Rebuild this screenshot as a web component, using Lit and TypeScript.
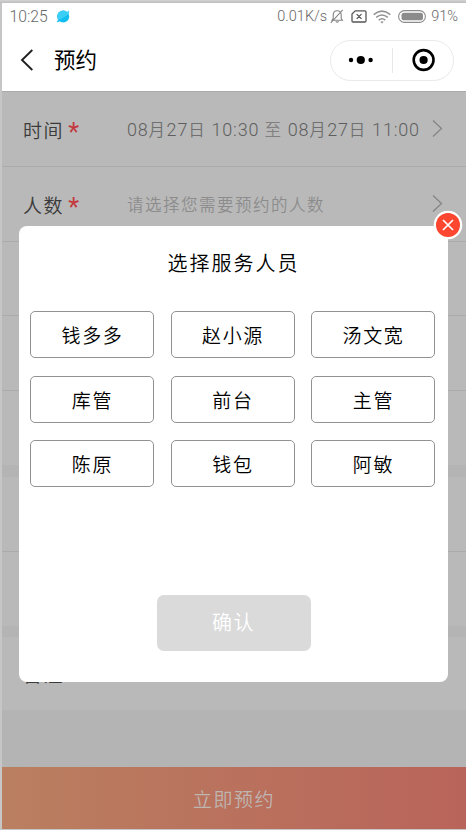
import { LitElement, html, css } from "lit";
import { customElement, state } from "lit/decorators.js";

const STAFF = ["钱多多", "赵小源", "汤文宽", "库管", "前台", "主管", "陈原", "钱包", "阿敏"];

@customElement("status-bar")
class StatusBar extends LitElement {
  static styles = css`
    :host { display: flex; align-items: center; height: 27px; padding: 0 8px 0 7.500px; color: #686868;
      font: 15.2px/27px Roboto, "Noto Sans CJK SC", sans-serif; font-weight: 350; }
    .clock { width: 39px; margin-right: 7.500px; font-size: 15.7px; white-space: nowrap; }
    .grow { flex: 1; }
    svg { display: block; flex: none; }
    .speed { font-size: 14.5px; margin-right: 3px; white-space: nowrap; }
    .bell { margin-right: 7px; }
    .sim { margin-right: 6px; }
    .wifi { margin-right: 7px; }
    .battery { margin-right: 5px; }
    .percent { font-size: 14.5px; }
  `;
  render() {
    return html`
      <span class="clock">10:25</span>
      <svg width="14" height="14" viewBox="0 0 14 14">
        <circle cx="7.200" cy="6.500" r="6" fill="#12bdf0" />
        <path d="M1.300 7.500A6 6 0 0 1 11 2L13.200.3l-.5 3.400C9.700 6.500 6 9.100 2.200 10z" fill="#3bcff7" />
        <path d="M2 9.800.7 12.300 4 11.500z" fill="#12bdf0" />
      </svg>
      <span class="grow"></span>
      <span class="speed">0.01K/s</span>
      <svg class="bell" width="14" height="15" viewBox="0 0 14 15" fill="none" stroke="#858585" stroke-width="1.1">
        <path d="M2 11.3h10.4L11.2 9.6V6c0-2.5-1.6-4.2-4-4.2S3.2 3.500 3.200 6v3.600zM5.700 12.300q1.500 1.500 3 0M12.700.8.8 13.800" />
      </svg>
      <svg class="sim" width="16" height="13" viewBox="0 0 16 13" fill="none" stroke="#555" stroke-width="1.3">
        <path d="M4.200.9h9.600q1.200 0 1.200 1.200v8.700q0 1.200-1.200 1.200H2.200Q1 12 1 10.800V4zM5.700 4.100l4.800 4.800M10.500 4.100 5.700 8.900" />
      </svg>
      <svg class="wifi" width="18" height="14" viewBox="0 0 18 14" fill="none" stroke="#929292" stroke-width="1.500">
        <path d="M.7 4.600q8.300-7 16.600 0M3.200 7.400q5.800-4.800 11.600 0M5.700 10.100q3.300-2.700 6.600 0" />
        <path d="M7.300 11.800q1.700-1.300 3.400 0L9 13.600z" fill="#929292" stroke="none" />
      </svg>
      <svg class="battery" width="28" height="13" viewBox="0 0 28 13">
        <rect x=".6" y=".6" width="26.800" height="11.800" rx="5.900" fill="#fff" stroke="#8b8b8b" stroke-width="1.100" />
        <rect x="3.500" y="2.700" width="21.500" height="7.600" rx="2.600" fill="#8b8b8b" />
      </svg>
      <span class="percent">91%</span>
    `;
  }
}

@customElement("nav-bar")
class NavBar extends LitElement {
  static styles = css`
    :host { display: flex; align-items: center; height: 60px; padding: 0 12px 0 17px; box-sizing: border-box; }
    svg { display: block; }
    .title { flex: 1; margin-left: 21px; margin-top: -2px; font-size: 21.500px; line-height: 30px; color: #000; font-weight: 400; }
    .capsule { display: flex; align-items: center; width: 124px; height: 41px; box-sizing: border-box;
      border: 1px solid #e9e9e9; border-radius: 21px; }
    .half { flex: 1; display: flex; justify-content: center; }
    .rule { width: 1px; height: 25px; background: #e7e7e7; }
  `;
  render() {
    return html`
      <svg width="14" height="24" viewBox="0 0 14 24" fill="none" stroke="#222" stroke-width="1.900">
        <path d="M13.300 2 3 12l10.300 10" />
      </svg>
      <span class="title">预约</span>
      <div class="capsule">
        <div class="half">
          <svg width="26" height="10" viewBox="0 0 26 10">
            <circle cx="3" cy="5" r="2.200" /><circle cx="12.800" cy="5" r="4.100" /><circle cx="22.600" cy="5" r="2.200" />
          </svg>
        </div>
        <div class="rule"></div>
        <div class="half">
          <svg width="24" height="24" viewBox="0 0 24 24">
            <circle cx="12.600" cy="12" r="9.900" fill="none" stroke="#000" stroke-width="2.600" /><circle cx="12.600" cy="12" r="4.100" />
          </svg>
        </div>
      </div>
    `;
  }
}

@customElement("app-root")
class AppRoot extends LitElement {
  @state() private open = true;

  static styles = css`
    :host { display: block; position: relative; width: 466px; height: 830px; box-sizing: border-box; overflow: hidden;
      padding: 3px 0 0 2px; background: linear-gradient(#d4d4d4, #bdbdbd 3px, #c6c6c6 4px);
      font-family: "Noto Sans CJK SC", sans-serif; font-weight: 350; }
    .screen { display: flex; flex-direction: column; height: 826px; background: #b4b4b4; }
    .head { height: 89px; background: #fff; border-bottom: 1px solid #a9abaa; box-sizing: border-box; flex: none; }
    .row { display: flex; align-items: center; flex: none; height: 74.800px; box-sizing: border-box; padding: 0 23px 0 21px;
      border-bottom: 1px solid #ababab; background: #b9b9b9; }
    .row.last { border-bottom-color: #b9b9b9; height: 74.300px; }
    .row.note { height: 73px; }
    .row.note .label { padding: 0; }
    .band { flex: none; height: 11.300px; background: #b4b4b4; }
    .label { width: 104px; font-size: 19px; letter-spacing: 1.600px; color: #3a3a3a; white-space: nowrap; padding-top: 3px;
      box-sizing: border-box; display: flex; }
    .star { color: #c4393d; font: 400 25px/28px Roboto, sans-serif; letter-spacing: 0; margin: 3px 0 -3px 4px; }
    .value { flex: 1; white-space: nowrap; font-size: 16.500px; letter-spacing: 1.500px; color: #707070; }
    .value.hint { color: #8c8c8c; }
    .num { font-family: Roboto, sans-serif; font-weight: 300; font-size: 18px; letter-spacing: .82px; color: #5e5e5e; }
    .to { color: #808080; }
    .arrow { display: block; }
    .fill { flex: 1; }
    .submit { flex: none; height: 62px; display: flex; align-items: center; justify-content: center;
      background: linear-gradient(90deg, #ba7f60, #b9645a); color: #bfb5b1; font-size: 19px; letter-spacing: 1.500px; }
    .modal { position: absolute; left: 19px; top: 226px; width: 429px; height: 456px; box-sizing: border-box; padding: 21px 12px 31px;
      background: #fff; border-radius: 8px; display: flex; flex-direction: column; align-items: center; color: #000; }
    .heading { font-size: 20px; line-height: 32px; letter-spacing: 2px; }
    .grid { margin: 32px 2px 0 0; width: 405px; display: grid; grid-template-columns: repeat(3, 124px); justify-content: space-between;
      row-gap: 17.500px; }
    .person { height: 47px; box-sizing: border-box; border: 1px solid #929292; border-radius: 5px; display: flex;
      align-items: center; justify-content: center; font-size: 19px; letter-spacing: 1.700px; padding-left: 1px; }
    .confirm { margin-top: auto; width: 154px; height: 56px; border-radius: 7px; background: #dadada; color: #fff;
      font-size: 20px; letter-spacing: 1.500px; display: flex; align-items: center; justify-content: center; padding-bottom: 3px; box-sizing: border-box; }
    .close { position: absolute; left: 414px; top: -16px; width: 30px; height: 30px; }
  `;

  private arrow() {
    return html`<svg class="arrow" width="11" height="18" viewBox="0 0 11 18" fill="none" stroke="#858585" stroke-width="1.300">
      <path d="M1 .5l8.500 8L1 16.500" />
    </svg>`;
  }

  private moment(month: string, day: string, time: string) {
    return html`<span class="num">${month}</span>月<span class="num">${day}</span>日<span class="num"> ${time}</span>`;
  }

  render() {
    return html`
      <div class="screen">
        <div class="head"><status-bar></status-bar><nav-bar></nav-bar></div>
        <div class="row">
          <span class="label">时间<span class="star">*</span></span>
          <span class="value">${this.moment("08", "27", "10:30")} <span class="to">至</span> ${this.moment("08", "27", "11:00")}</span>
          ${this.arrow()}
        </div>
        <div class="row">
          <span class="label">人数<span class="star">*</span></span>
          <span class="value hint">请选择您需要预约的人数</span>
          ${this.arrow()}
        </div>
        <div class="row"></div>
        <div class="row"></div>
        <div class="row last"></div>
        <div class="band"></div>
        <div class="row"></div>
        <div class="row last"></div>
        <div class="band"></div>
        <div class="row last note"><span class="label">备注</span></div>
        <div class="fill"></div>
        <div class="submit">立即预约</div>
      </div>
      ${this.open
        ? html`<div class="modal">
            <div class="heading">选择服务人员</div>
            <div class="grid">${STAFF.map((name) => html`<div class="person">${name}</div>`)}</div>
            <div class="confirm">确认</div>
            <svg class="close" viewBox="0 0 30 30" @click=${() => (this.open = false)}>
              <circle cx="15" cy="15" r="14.300" fill="#fff" />
              <circle cx="15" cy="15" r="12" fill="#fc4630" />
              <path d="M10 10l10 10M20 10 10 20" stroke="#fff" stroke-width="1.700" />
            </svg>
          </div>`
        : null}
    `;
  }
}
